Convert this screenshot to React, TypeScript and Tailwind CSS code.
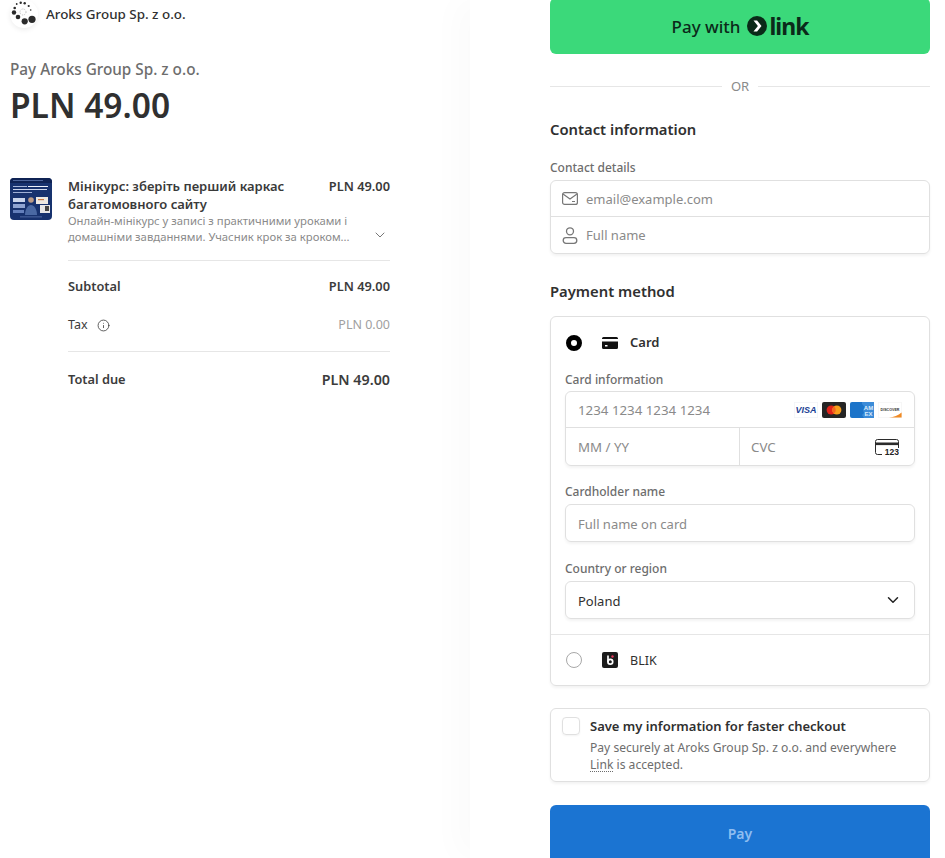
import { ChevronDown, Info } from 'lucide-react';

function Logo() {
  const dots = [
    [6.7, 4, 0.9], [10.7, 2.7, 1.2], [14.7, 3.3, 1.2], [18.7, 6, 1.1], [20.7, 10, 0.8], [4.7, 8, 1.3],
    [4, 12.500, 2.2], [8, 17, 2.3], [14.700, 21.300, 3.1], [22, 19.300, 3.6],
  ];
  return (
    <div className="flex h-[28px] w-[28px] items-center justify-center rounded-full bg-white shadow-[0_2px_5px_rgba(0,0,0,0.07)]">
      <svg viewBox="0 0 28 28" className="h-[28px] w-[28px]">
        {dots.map(([cx, cy, r], i) => (
          <circle key={i} cx={cx} cy={cy} r={r} fill="#2b2b2b" />
        ))}
        <circle cx="13" cy="12" r="3" fill="none" stroke="#888" strokeWidth="0.6" strokeDasharray="1 1.2" />
      </svg>
    </div>
  );
}

function Thumb() {
  return (
    <svg viewBox="0 0 42 42" className="h-[42px] w-[42px] shrink-0 rounded-[4px]">
      <rect width="42" height="42" fill="#17326e" />
      <rect width="42" height="5" fill="#0f2354" />
      <rect x="3" y="2" width="30" height="0.8" fill="#5d76ad" />
      <rect x="3" y="8" width="14" height="1" fill="#a9b8da" />
      <rect x="18" y="8" width="20" height="1" fill="#eef2fa" />
      <rect x="3" y="11" width="34" height="1" fill="#cfd9ee" />
      <rect x="3" y="14" width="19" height="1" fill="#9fb0d6" />
      <rect x="3" y="20" width="12" height="4" fill="#c9d5ec" />
      <rect x="3" y="26" width="12" height="4" fill="#8ea4d2" />
      <rect x="3" y="32" width="11" height="3" fill="#6480bb" />
      <circle cx="21" cy="22" r="2.800" fill="#b99a86" />
      <path d="M15 37c0-6 3-10 6-10s6 4 6 10z" fill="#4a69a3" />
      <rect x="26" y="19" width="12" height="7" fill="#ece8e1" />
      <rect x="28" y="21" width="6" height="1.200" fill="#c97a44" />
      <rect x="30" y="27" width="10" height="8" fill="#e6e6e6" />
      <rect x="35" y="28" width="4" height="5" fill="#444" />
      <rect x="10" y="38.500" width="22" height="0.800" fill="#5a74ad" />
    </svg>
  );
}

function LinkButton() {
  return (
    <button className="-mt-[2px] flex h-[56px] w-full items-center justify-center rounded-[6px] bg-[#3bd97a] text-[#0b2a1a]">
      <span className="pt-[1px] text-[17px] font-medium">Pay with</span>
      <svg viewBox="0 0 20 20" className="ml-[6px] h-[20px] w-[20px]">
        <circle cx="10" cy="10" r="10" fill="#0a2a18" />
        <path d="M6.500 4.500h3.600l4.400 5.500-4.400 5.500H6.500l4.400-5.500z" fill="#fff" />
      </svg>
      <span className="ml-[3px] text-[23px] font-bold leading-none tracking-[-1px]">link</span>
    </button>
  );
}

function CardBrands() {
  return (
    <div className="flex items-center gap-[4px]">
      <svg viewBox="0 0 24 16" className="h-[16px] w-[24px]">
        <rect x="0.250" y="0.250" width="23.500" height="15.500" rx="1" fill="#fff" stroke="#e3e6ef" strokeWidth="0.500" />
        <text x="12" y="11.300" textAnchor="middle" fontSize="9" fontWeight="700" fontStyle="italic" fill="#1b3f94" fontFamily="Liberation Sans, sans-serif">VISA</text>
      </svg>
      <svg viewBox="0 0 24 16" className="h-[16px] w-[24px]">
        <rect width="24" height="16" rx="2" fill="#252525" />
        <circle cx="9.200" cy="8" r="4.600" fill="#e2231a" />
        <circle cx="14.800" cy="8" r="4.600" fill="#f79e1b" />
        <path d="M12 4.400a4.600 4.600 0 0 1 0 7.200 4.600 4.600 0 0 1 0-7.200z" fill="#f26522" />
      </svg>
      <svg viewBox="0 0 24 16" className="h-[16px] w-[24px]">
        <rect width="24" height="16" rx="2" fill="#1c74c9" />
        <path d="M12 0h12v16H14l-2-3 2-2-1-3 2-3-3-3z" fill="#3b8bd8" />
        <text x="18.500" y="7.500" textAnchor="middle" fontSize="6" fontWeight="700" fill="#dcecfa" fontFamily="Liberation Sans, sans-serif">AM</text>
        <text x="18.500" y="13.500" textAnchor="middle" fontSize="6" fontWeight="700" fill="#dcecfa" fontFamily="Liberation Sans, sans-serif">EX</text>
      </svg>
      <svg viewBox="0 0 24 16" className="h-[16px] w-[24px]">
        <rect x="0.250" y="0.250" width="23.500" height="15.500" rx="1" fill="#fff" stroke="#e8e8e8" strokeWidth="0.500" />
        <text x="12" y="9" textAnchor="middle" fontSize="3.600" fontWeight="700" fill="#333" fontFamily="Liberation Sans, sans-serif">DISCOVER</text>
        <path d="M11 15.600c5-.6 9-2 12.600-5v5z" fill="#f08a24" />
      </svg>
    </div>
  );
}

function CvcIcon() {
  return (
    <svg viewBox="0 0 24 16" className="h-[16px] w-[24px]" fill="none">
      <path d="M7 15.500H2.500a2 2 0 0 1-2-2v-11a2 2 0 0 1 2-2h19a2 2 0 0 1 2 2V9" stroke="#2b2b2b" />
      <rect x="0.500" y="3.500" width="23" height="2.600" fill="#2b2b2b" />
      <text x="24" y="15.500" textAnchor="end" fontSize="8.500" fontWeight="700" fill="#222" fontFamily="Liberation Sans, sans-serif">123</text>
    </svg>
  );
}

function MailIcon() {
  return (
    <svg viewBox="0 0 16 13" className="h-[13px] w-[16px]" fill="none" stroke="#777" strokeWidth="1.200">
      <rect x="0.600" y="0.600" width="14.800" height="11.800" rx="2" />
      <path d="M1 2l7 5 7-5M10 9.500h3" />
    </svg>
  );
}

function PersonIcon() {
  return (
    <svg viewBox="0 0 16 17" className="h-[17px] w-[16px]" fill="none" stroke="#777" strokeWidth="1.300">
      <circle cx="8" cy="4.300" r="3.500" />
      <rect x="1.200" y="10.700" width="13.600" height="5.600" rx="2.800" />
    </svg>
  );
}

function SummaryRow({ label, value, bold }: { label: string; value: string; bold?: boolean }) {
  return (
    <div className="flex items-center justify-between text-[12.800px] font-semibold text-[#3c3c3c]">
      <span>{label}</span>
      <span className={bold ? 'text-[14.300px]' : ''}>{value}</span>
    </div>
  );
}

function Field({ children }: { children: React.ReactNode }) {
  return (
    <div className="flex h-[38px] items-center rounded-[6px] border border-[#e0e0e0] px-[12px] text-[13px] shadow-[0_2px_3px_rgba(0,0,0,0.05)]">
      {children}
    </div>
  );
}

export default function App() {
  return (
    <div className="flex h-[858px] w-[945px] overflow-hidden bg-white font-['Noto_Sans',sans-serif] text-[#1f1f1f]">
      <div className="w-[470px] shrink-0 pl-[10px]">
        <div className="flex items-center gap-[8px]">
          <Logo />
          <span className="text-[13.400px] font-medium text-[#303030]">Aroks Group Sp. z o.o.</span>
        </div>
        <p className="mt-[30px] text-[15.300px] font-medium leading-[22px] text-[#6d6d6d]">Pay Aroks Group Sp. z o.o.</p>
        <p className="mt-[2px] text-[33.500px] font-semibold leading-[46px] text-[#303030]">PLN 49.00</p>

        <div className="mt-[50px] w-[380px]">
          <div className="flex gap-[16px]">
            <Thumb />
            <div className="min-w-0 flex-1">
              <div className="-mt-[1px] flex justify-between gap-[20px] text-[13px] font-semibold leading-[18px] text-[#3a3a3a]">
                <span className="w-[240px]">Мінікурс: зберіть перший каркас багатомовного сайту</span>
                <span className="shrink-0 text-[12.800px]">PLN 49.00</span>
              </div>
              <div className="flex items-end justify-between">
                <p className="w-[290px] text-[11.300px] leading-[16px] text-[#8a8a8a]">
                  Онлайн-мінікурс у записі з практичними уроками і домашніми завданнями. Учасник крок за кроком...
                </p>
                <ChevronDown className="mb-[2px] mr-[2px] h-[16px] w-[16px] text-[#777]" strokeWidth={1.500} />
              </div>
            </div>
          </div>

          <div className="ml-[58px] mt-[15px] border-t border-[#e6e6e6] pt-[16px]">
            <SummaryRow label="Subtotal" value="PLN 49.00" />
            <div className="mt-[20px] flex items-center justify-between text-[12.500px] text-[#3c3c3c]">
              <span className="flex items-center gap-[9px]">
                Tax <Info className="h-[13px] w-[13px]" strokeWidth={1.500} />
              </span>
              <span className="text-[#a0a0a0]">PLN 0.00</span>
            </div>
            <div className="mt-[16px] border-t border-[#e6e6e6] pt-[17px]">
              <SummaryRow label="Total due" value="PLN 49.00" bold />
            </div>
          </div>
        </div>
      </div>

      <div className="relative flex-1 bg-white pl-[80px] pr-[15px] shadow-[-15px_0_30px_rgba(0,0,0,0.02)]">
        <LinkButton />

        <div className="mt-[22px] flex items-center gap-[8px] text-[13px] leading-[20px] text-[#8a8a8a]">
          <div className="h-px flex-1 bg-[#e6e6e6]" />
          <span className="px-[1px]">OR</span>
          <div className="h-px flex-1 bg-[#e6e6e6]" />
        </div>

        <h2 className="mt-[21px] text-[14.800px] font-semibold leading-[24px] text-[#303030]">Contact information</h2>
        <p className="mt-[18px] text-[12px] font-medium leading-[18px] text-[#6d6d6d]">Contact details</p>
        <div className="mt-[3px] rounded-[6px] border border-[#e0e0e0] text-[13px] text-[#8a8a8a] shadow-[0_2px_3px_rgba(0,0,0,0.05)]">
          <div className="flex h-[36px] items-center gap-[8px] border-b border-[#e0e0e0] px-[11px]">
            <MailIcon />
            <span className="pt-[3px]">email@example.com</span>
          </div>
          <div className="flex h-[36px] items-center gap-[8px] px-[11px]">
            <PersonIcon />
            <span className="pt-[2px]">Full name</span>
          </div>
        </div>

        <h2 className="mt-[25px] text-[14.800px] font-semibold leading-[24px] text-[#303030]">Payment method</h2>
        <div className="mt-[13px] rounded-[6px] border border-[#e0e0e0] shadow-[0_2px_3px_rgba(0,0,0,0.05)]">
          <div className="px-[14px] pb-[15px] pt-[17px]">
            <div className="flex h-[18px] items-center pl-[1px]">
              <span className="h-[16px] w-[16px] rounded-full border-[5px] border-black bg-white" />
              <svg viewBox="0 0 16 12" className="ml-[20px] h-[12px] w-[16px]">
                <path d="M0 1.500A1.500 1.500 0 0 1 1.500 0h13A1.500 1.500 0 0 1 16 1.500V2H0zM0 4.500h16v6a1.500 1.500 0 0 1-1.500 1.500h-13A1.500 1.500 0 0 1 0 10.500zM3 8v1.500h2.500V8z" fill="#111" />
              </svg>
              <span className="ml-[12px] text-[13px] font-semibold text-[#303030]">Card</span>
            </div>

            <p className="mt-[19px] text-[12px] font-medium leading-[18px] text-[#6d6d6d]">Card information</p>
            <div className="mt-[2px] rounded-[6px] border border-[#e0e0e0] text-[13.300px] text-[#8a8a8a] shadow-[0_2px_3px_rgba(0,0,0,0.05)]">
              <div className="flex h-[36px] items-center justify-between border-b border-[#e0e0e0] px-[12px]">
                <span className="pt-[3px]">1234 1234 1234 1234</span>
                <CardBrands />
              </div>
              <div className="flex h-[37px]">
                <div className="flex w-[174px] items-center border-r border-[#e0e0e0] pl-[12px] pt-[2px]">MM / YY</div>
                <div className="flex flex-1 items-center justify-between pl-[11px] pr-[15px]">
                  <span className="pt-[2px]">CVC</span>
                  <CvcIcon />
                </div>
              </div>
            </div>

            <p className="mt-[17px] text-[12px] font-medium leading-[18px] text-[#6d6d6d]">Cardholder name</p>
            <div className="mt-[3px]">
              <Field>
                <span className="pt-[3px] text-[#8a8a8a]">Full name on card</span>
              </Field>
            </div>

            <p className="mt-[18px] text-[12px] font-medium leading-[18px] text-[#6d6d6d]">Country or region</p>
            <div className="mt-[3px]">
              <Field>
                <span className="flex-1 pt-[3px] text-[#303030]">Poland</span>
                <ChevronDown className="h-[18px] w-[18px] text-[#222]" strokeWidth={2} />
              </Field>
            </div>
          </div>

          <div className="flex h-[51px] items-center border-t border-[#e6e6e6] px-[15px]">
            <span className="h-[16px] w-[16px] rounded-full border border-[#a8a8a8] bg-white" />
            <svg viewBox="0 0 16 16" className="ml-[20px] h-[16px] w-[16px]">
              <rect width="16" height="16" rx="2" fill="#1c1c1c" />
              <path d="M6 3.500v6.500" fill="none" stroke="#fff" strokeWidth="1.700" />
              <circle cx="8.300" cy="9.700" r="2.400" fill="none" stroke="#fff" strokeWidth="1.700" />
              <circle cx="10.500" cy="4.500" r="1.200" fill="#e8375a" />
            </svg>
            <span className="ml-[12px] pt-[2px] text-[12.500px] text-[#303030]">BLIK</span>
          </div>
        </div>

        <div className="mt-[22px] flex h-[74px] gap-[10px] rounded-[6px] border border-[#e0e0e0] pl-[11px] pr-[12px] pt-[8px] shadow-[0_2px_3px_rgba(0,0,0,0.05)]">
          <span className="h-[18px] w-[18px] shrink-0 rounded-[4px] border border-[#e0e0e0] shadow-[0_1px_2px_rgba(0,0,0,0.05)]" />
          <div className="min-w-0">
            <p className="text-[13px] font-semibold leading-[18px] text-[#303030]">Save my information for faster checkout</p>
            <p className="mt-[4px] text-[12.100px] leading-[17px] text-[#6d6d6d]">
              Pay securely at Aroks Group Sp. z o.o. and everywhere{' '}
              <span className="underline decoration-dotted underline-offset-2">Link</span> is accepted.
            </p>
          </div>
        </div>

        <button className="mt-[23px] h-[60px] w-full rounded-[6px] bg-[#1b74d2] pb-[4px] text-[14px] font-semibold text-[#8fbdf0]">
          Pay
        </button>
      </div>
    </div>
  );
}
